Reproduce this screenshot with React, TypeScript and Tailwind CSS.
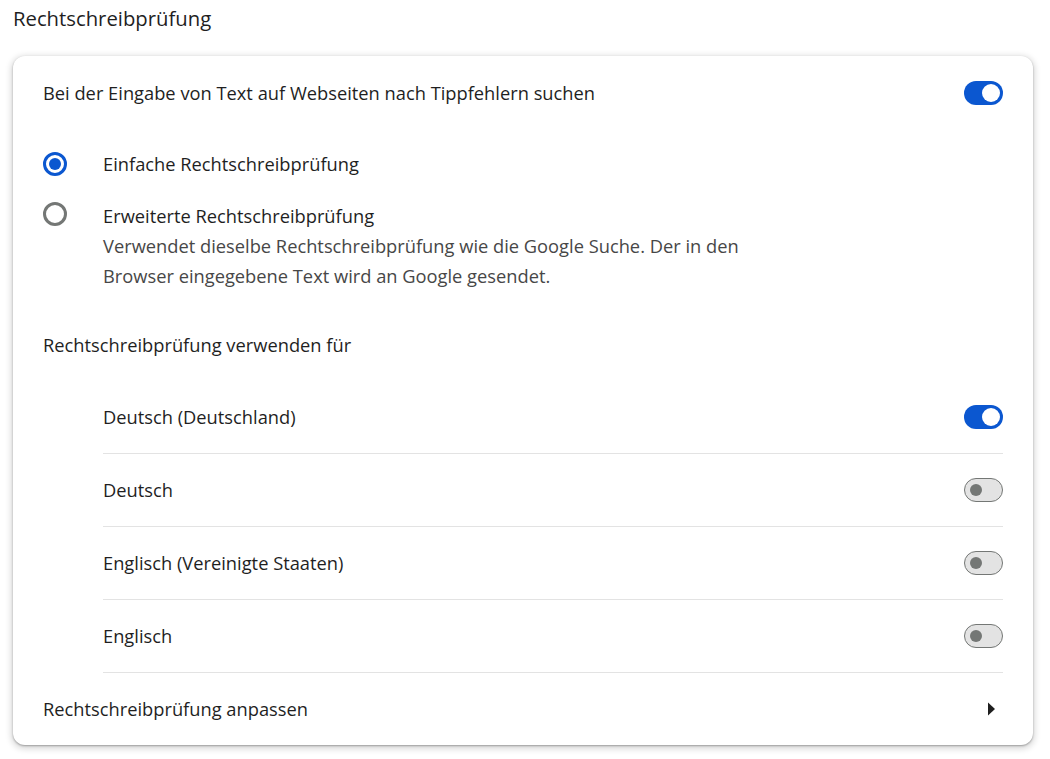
const Toggle = ({ on }: { on: boolean }) =>
  on ? (
    <div className="relative h-[24px] w-[39px] shrink-0 rounded-full bg-[#0b57d0]">
      <div className="absolute right-[3px] top-[3px] h-[18px] w-[18px] rounded-full bg-white" />
    </div>
  ) : (
    <div className="relative h-[24px] w-[39px] shrink-0 rounded-full border-[1.5px] border-[#747775] bg-[#e3e3e3]">
      <div className="absolute left-[5px] top-[4.5px] h-[12px] w-[12px] rounded-full bg-[#747775]" />
    </div>
  );

const Radio = ({ checked }: { checked: boolean }) =>
  checked ? (
    <div className="flex h-[24px] w-[24px] shrink-0 items-center justify-center rounded-full border-[3px] border-[#0b57d0]">
      <div className="h-[12px] w-[12px] rounded-full bg-[#0b57d0]" />
    </div>
  ) : (
    <div className="h-[24px] w-[24px] shrink-0 rounded-full border-[3px] border-[#747775]" />
  );

const languages = [
  { name: "Deutsch (Deutschland)", on: true },
  { name: "Deutsch", on: false },
  { name: "Englisch (Vereinigte Staaten)", on: false },
  { name: "Englisch", on: false },
];

export default function App() {
  return (
    <div
      className="min-h-screen bg-white pl-[13px] pr-[17px] text-[18.3px] text-[#1f1f1f]"
      style={{ fontFamily: '"Open Sans", "Noto Sans", sans-serif' }}
    >
      <div className="flex h-[56px] items-start pt-[4px] text-[20.3px] leading-[28px]">Rechtschreibprüfung</div>

      <div className="rounded-[12px] bg-white px-[30px] shadow-[0_1px_2px_rgba(0,0,0,0.3),0_2px_6px_2px_rgba(0,0,0,0.15)]">
        {/* main toggle */}
        <div className="flex h-[74px] items-center justify-between">
          <span>Bei der Eingabe von Text auf Webseiten nach Tippfehlern suchen</span>
          <Toggle on />
        </div>

        {/* radio group */}
        <div className="flex h-[68px] items-center">
          <Radio checked />
          <span className="ml-[36px]">Einfache Rechtschreibprüfung</span>
        </div>
        <div className="flex items-start pb-[18px] pt-[3px] leading-[30px]">
          <div className="flex h-[30px] items-center">
            <div className="-mt-[4px]">
              <Radio checked={false} />
            </div>
          </div>
          <div className="ml-[36px]">
            <div>Erweiterte Rechtschreibprüfung</div>
            <div className="max-w-[660px] text-[#474747]">
              Verwendet dieselbe Rechtschreibprüfung wie die Google Suche. Der in den Browser eingegebene Text wird an Google gesendet.
            </div>
          </div>
        </div>

        <div className="flex h-[72px] items-center">Rechtschreibprüfung verwenden für</div>

        <div className="pl-[60px]">
          {languages.map((l) => (
            <div
              key={l.name}
              className="flex h-[73px] items-center justify-between border-b border-[#e3e3e3]"
            >
              <span>{l.name}</span>
              <Toggle on={l.on} />
            </div>
          ))}
        </div>

        <div className="flex h-[72px] items-center justify-between">
          <span>Rechtschreibprüfung anpassen</span>
          <svg width="20" height="20" viewBox="0 0 20 20" className="mr-[2px]">
            <path d="M7 3.5 L14 10 L7 16.5 Z" fill="#1f1f1f" />
          </svg>
        </div>
      </div>
    </div>
  );
}
